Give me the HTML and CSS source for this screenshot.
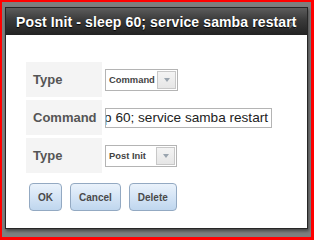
FILE: index.html
```html
<!DOCTYPE html>
<html lang="en">
<head>
  <meta charset="UTF-8" />
  <title>Post Init</title>
  <link rel="stylesheet" href="styles.css">
</head>
<body>
  <div class="frame">
    <div class="dialog">
      <div class="titlebar">
        <span class="close-icon">
          <svg width="9" height="9" viewBox="0 0 10 10"><path d="M1 1 L9 9 M9 1 L1 9" stroke="#9a9a9a" stroke-width="2"/></svg>
        </span>
        <span class="title">Post Init - sleep 60; service samba restart</span>
      </div>

      <div class="content">
        <div class="form">
          <div class="label">Type</div>
          <div class="field">
            <div class="select select-wide">
              <span class="select-text">Command</span>
              <span class="select-arrow"></span>
            </div>
          </div>

          <div class="label">Command</div>
          <div class="field">
            <div class="input"><span>sleep 60; service samba restart</span></div>
          </div>

          <div class="label">Type</div>
          <div class="field">
            <div class="select">
              <span class="select-text">Post Init</span>
              <span class="select-arrow"></span>
            </div>
          </div>
        </div>

        <div class="buttons">
          <button class="btn">OK</button>
          <button class="btn">Cancel</button>
          <button class="btn">Delete</button>
        </div>
      </div>
    </div>
  </div>
</body>
</html>
```

FILE: styles.css
```css
* {
  box-sizing: border-box;
  margin: 0;
  padding: 0;
}

body {
  font-family: 'Liberation Sans', Arial, sans-serif;
  background: #fff;
}

.frame {
  width: 314px;
  height: 240px;
  border: 2px solid #ff0000;
  border-right-width: 3px;
  border-bottom-width: 3px;
  background: #7e7e7e;
  padding: 5px 3px 8px 3px;
}

.dialog {
  width: 303px;
  height: 222px;
  border: 1px solid #262626;
  background: #fff;
  box-shadow: 1px 2px 3px rgba(0, 0, 0, 0.45);
  display: flex;
  flex-direction: column;
}

.titlebar {
  position: relative;
  height: 27px;
  background: linear-gradient(to bottom, #5c5c5c 0%, #3a3a3a 45%, #232323 100%);
  display: flex;
  align-items: center;
  padding-left: 10px;
}

.title {
  position: relative;
  color: #fff;
  font-weight: bold;
  font-size: 14px;
  letter-spacing: 0.12px;
  white-space: nowrap;
  text-shadow: 0 1px 1px #000;
}

.close-icon {
  position: absolute;
  right: 10px;
  top: 7px;
  opacity: 0.45;
}

.content {
  padding: 27px 20px 0 20px;
}

.form {
  display: grid;
  grid-template-columns: 76px 1fr;
  grid-auto-rows: 35px;
  column-gap: 3px;
  row-gap: 3px;
}

.label {
  background: #f4f4f4;
  color: #555;
  font-weight: bold;
  font-size: 13px;
  display: flex;
  align-items: center;
  padding-left: 7px;
}

.field {
  display: flex;
  align-items: center;
}

.select {
  width: 72px;
  height: 22px;
  border: 1px solid #b4b4b4;
  background: #fff;
  display: flex;
}

.select-wide {
  width: 73px;
}

.select-text {
  flex: 1;
  font-size: 9.4px;
  font-weight: bold;
  color: #444;
  display: flex;
  align-items: center;
  padding-left: 3px;
  white-space: nowrap;
}

.select-arrow {
  width: 19px;
  margin: 1px;
  border: 1px solid #c8c8c8;
  background: linear-gradient(to bottom, #f4f4f4, #e6e6e6);
  display: flex;
  align-items: center;
  justify-content: center;
}

.select-arrow::after {
  content: '';
  border-left: 3px solid transparent;
  border-right: 3px solid transparent;
  border-top: 4px solid #9aa4ae;
}

.input {
  width: 167px;
  height: 20px;
  border: 1px solid #b4b4b4;
  background: #fff;
  font-size: 13.6px;
  color: #222;
  display: flex;
  align-items: center;
  justify-content: flex-end;
  padding-right: 3px;
  white-space: nowrap;
  overflow: hidden;
}

.buttons {
  display: flex;
  gap: 8px;
  margin-top: 10px;
  padding-left: 3px;
}

.btn {
  height: 28px;
  padding: 0 8px;
  border: 1px solid #93a9c2;
  border-radius: 4px;
  background: linear-gradient(to bottom, #eaf2fb 0%, #d4e4f5 50%, #bfd6ee 100%);
  font-family: 'Liberation Sans', Arial, sans-serif;
  font-size: 10px;
  font-weight: bold;
  color: #4a4a4a;
}
```
